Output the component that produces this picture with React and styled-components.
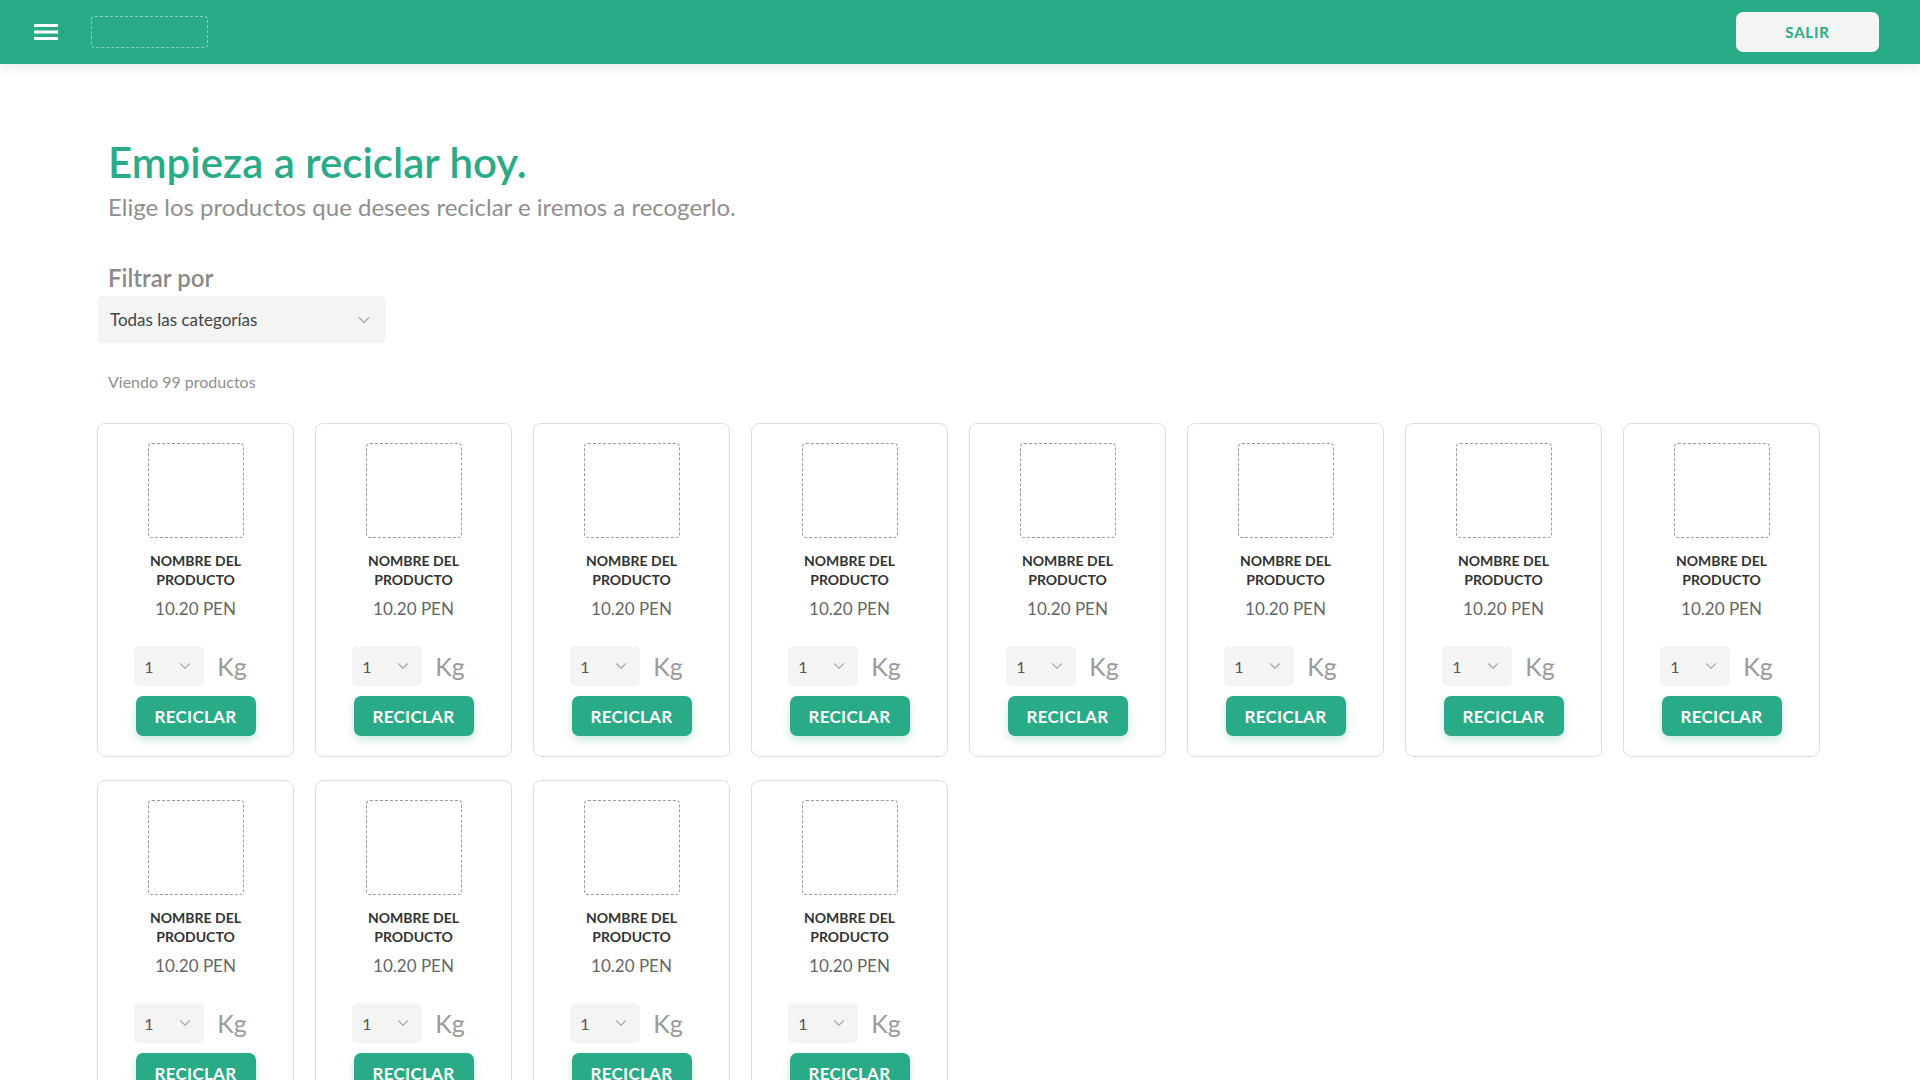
import React from "react";
import styled, { createGlobalStyle } from "styled-components";
import { ChevronDown } from "lucide-react";

const GREEN = "#2aab87";

const GlobalStyle = createGlobalStyle`
    * {
        box-sizing: border-box;
    }
    body {
        margin: 0;
        background: #ffffff;
        font-family: Lato, "Noto Sans", sans-serif;
        color: #333;
    }
`;

const Header = styled.header`
    height: 64px;
    background-color: ${GREEN};
    display: flex;
    align-items: center;
    padding: 0 41px 0 34px;
    box-shadow: 0 4px 12px rgba(0, 0, 0, 0.08);
    position: relative;
    z-index: 1;
`;

const MenuButton = styled.button`
    background: none;
    border: none;
    padding: 0;
    width: 24px;
    height: 24px;
    display: flex;
    align-items: center;
    cursor: pointer;
`;

const LogoSlot = styled.div`
    width: 117px;
    height: 32px;
    margin-left: 33px;
    border: 1px dashed rgba(255, 255, 255, 0.45);
    border-radius: 4px;
`;

const ExitButton = styled.button`
    margin-left: auto;
    width: 143px;
    height: 40px;
    border: none;
    border-radius: 7px;
    background: #f4f4f4;
    color: ${GREEN};
    font-family: Lato, sans-serif;
    font-weight: 700;
    font-size: 15px;
    letter-spacing: 0.8px;
    cursor: pointer;
`;

const Main = styled.main`
    padding: 74px 98px 40px 97px;
`;

const Intro = styled.section`
    padding-left: 11px;
`;

const Title = styled.h1`
    margin: 0;
    font-size: 42px;
    line-height: 48px;
    font-weight: 600;
    color: ${GREEN};
`;

const Subtitle = styled.p`
    margin: 6px 0 0;
    font-size: 24px;
    line-height: 30px;
    color: #8f8f8f;
`;

const FilterLabel = styled.h3`
    margin: 41px 0 0 11px;
    font-size: 24px;
    line-height: 30px;
    font-weight: 600;
    color: #8a8a8a;
`;

const SelectBox = styled.div`
    display: flex;
    align-items: center;
    justify-content: space-between;
    width: ${(p) => p.$width}px;
    height: ${(p) => p.$height}px;
    padding: 0 ${(p) => (p.$small ? 10 : 12)}px;
    background: #f4f4f4;
    border-radius: 5px;
    color: ${(p) => (p.$small ? "#555" : "#444")};
    font-size: ${(p) => (p.$small ? 16 : 17)}px;
    svg {
        color: #a9a9a9;
    }
`;

const FilterSelect = styled(SelectBox)`
    margin-top: 3px;
    margin-left: 1px;
`;

const Count = styled.p`
    margin: 29px 0 0 11px;
    font-size: 16px;
    color: #8f8f8f;
`;

const Grid = styled.div`
    display: grid;
    grid-template-columns: repeat(8, 197px);
    column-gap: 21px;
    row-gap: 23px;
    margin-top: 32px;
`;

const Card = styled.article`
    height: 334px;
    border: 1px solid #dedede;
    border-radius: 8px;
    background: #fff;
    display: flex;
    flex-direction: column;
    align-items: center;
    padding-top: 19px;
`;

const Thumb = styled.div`
    width: 96px;
    height: 95px;
    border: 1.5px dashed #9a9a9a;
    border-radius: 4px;
`;

const Name = styled.h4`
    margin: 13px 0 0;
    width: 120px;
    text-align: center;
    font-size: 14px;
    line-height: 19px;
    font-weight: 700;
    color: #333;
    text-transform: uppercase;
`;

const Price = styled.p`
    margin: 9px 0 0;
    font-size: 17px;
    color: #666;
`;

const QtyRow = styled.div`
    display: flex;
    align-items: center;
    gap: 13px;
    margin-top: 27px;
    margin-left: -10px;
`;

const Unit = styled.span`
    font-size: 25px;
    color: #9b9b9b;
`;

const RecycleButton = styled.button`
    margin-top: 10px;
    width: 120px;
    height: 40px;
    border: none;
    border-radius: 7px;
    background: ${GREEN};
    color: #fff;
    font-family: Lato, sans-serif;
    font-weight: 700;
    font-size: 17px;
    letter-spacing: 0.3px;
    box-shadow: 0 4px 10px rgba(42, 171, 135, 0.25);
    cursor: pointer;
`;

const products = Array.from({ length: 12 }, (_, i) => ({
    id: i,
    name: "Nombre del producto",
    price: "10.20 PEN",
}));

const ProductCard = ({ product }) => (
    <Card>
        <Thumb />
        <Name>{product.name}</Name>
        <Price>{product.price}</Price>
        <QtyRow>
            <SelectBox $width={70} $height={40} $small>
                1
                <ChevronDown size={18} strokeWidth={1.5} />
            </SelectBox>
            <Unit>Kg</Unit>
        </QtyRow>
        <RecycleButton>RECICLAR</RecycleButton>
    </Card>
);

const App = () => {
    return (
        <>
            <GlobalStyle />
            <Header>
                <MenuButton aria-label="menu">
                    <svg width="24" height="18" viewBox="0 0 24 18">
                        <rect x="0" y="1" width="24" height="3" fill="#fff" />
                        <rect x="0" y="7.5" width="24" height="3" fill="#fff" />
                        <rect x="0" y="14" width="24" height="3" fill="#fff" />
                    </svg>
                </MenuButton>
                <LogoSlot />
                <ExitButton>SALIR</ExitButton>
            </Header>
            <Main>
                <Intro>
                    <Title>Empieza a reciclar hoy.</Title>
                    <Subtitle>
                        Elige los productos que desees reciclar e iremos a recogerlo.
                    </Subtitle>
                </Intro>
                <FilterLabel>Filtrar por</FilterLabel>
                <FilterSelect $width={288} $height={47}>
                    Todas las categorías
                    <ChevronDown size={20} strokeWidth={1.5} />
                </FilterSelect>
                <Count>Viendo 99 productos</Count>
                <Grid>
                    {products.map((p) => (
                        <ProductCard key={p.id} product={p} />
                    ))}
                </Grid>
            </Main>
        </>
    );
};

export default App;
